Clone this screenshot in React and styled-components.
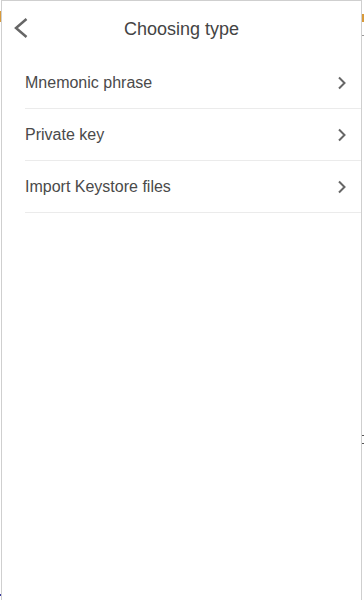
import styled, { createGlobalStyle } from "styled-components";

const GlobalStyle = createGlobalStyle`
  html, body {
    margin: 0;
    padding: 0;
    background: #fff;
  }
  body {
    font-family: "Liberation Sans", Arial, sans-serif;
  }
`;

const items = ["Mnemonic phrase", "Private key", "Import Keystore files"];

export default function App() {
  return (
    <>
      <GlobalStyle />
      <Page>
        <Panel>
          <Header>
            <BackButton aria-label="back">
              <svg width="18" height="22" viewBox="0 0 18 22">
                <path
                  d="M14.5 2 L4 11 L14.5 20"
                  fill="none"
                  stroke="#666"
                  strokeWidth="2.5"
                />
              </svg>
            </BackButton>
            <Title>Choosing type</Title>
          </Header>
          <List>
            {items.map((label) => (
              <Row key={label}>
                <Label>{label}</Label>
                <Arrow width="10" height="14" viewBox="0 0 10 14">
                  <path
                    d="M2 1.5 L7.5 7 L2 12.5"
                    fill="none"
                    stroke="#666"
                    strokeWidth="2"
                  />
                </Arrow>
              </Row>
            ))}
          </List>
        </Panel>
      </Page>
    </>
  );
}

const Page = styled.div`
  width: 364px;
  height: 600px;
  display: flex;
  padding-left: 1px;
  box-sizing: border-box;
  background:
    linear-gradient(#d89a3a, #d89a3a) 0 11px / 1px 11px no-repeat,
    linear-gradient(#d89a3a, #d89a3a) 362px 14px / 2px 8px no-repeat,
    linear-gradient(#999, #999) 362px 35px / 2px 1px no-repeat,
    linear-gradient(#555, #555) 362px 435px / 2px 1px no-repeat,
    linear-gradient(#555, #555) 362px 443px / 2px 1px no-repeat,
    linear-gradient(#3a3aa0, #3a3aa0) 0 594px / 1px 2px no-repeat,
    #fff;
`;

const Panel = styled.div`
  width: 361px;
  height: 600px;
  box-sizing: border-box;
  border: 1px solid #cfcfcf;
  border-bottom: none;
  background: #fff;
  display: flex;
  flex-direction: column;
`;

const Header = styled.div`
  height: 56px;
  flex-shrink: 0;
  display: flex;
  align-items: center;
  justify-content: center;
  position: relative;
`;

const BackButton = styled.div`
  position: absolute;
  left: 10px;
  top: 16px;
  width: 18px;
  height: 22px;
  display: flex;
  cursor: pointer;
`;

const Title = styled.div`
  font-size: 18px;
  color: #444;
  line-height: 20px;
`;

const List = styled.div`
  display: flex;
  flex-direction: column;
  padding-left: 23px;
`;

const Row = styled.div`
  height: 52px;
  box-sizing: border-box;
  border-bottom: 1px solid #ebebeb;
  display: flex;
  align-items: center;
  justify-content: space-between;
  padding-right: 14px;
  padding-top: 1px;
  cursor: pointer;
`;

const Label = styled.span`
  font-size: 16px;
  color: #4a4a4a;
`;

const Arrow = styled.svg`
  display: block;
`;
